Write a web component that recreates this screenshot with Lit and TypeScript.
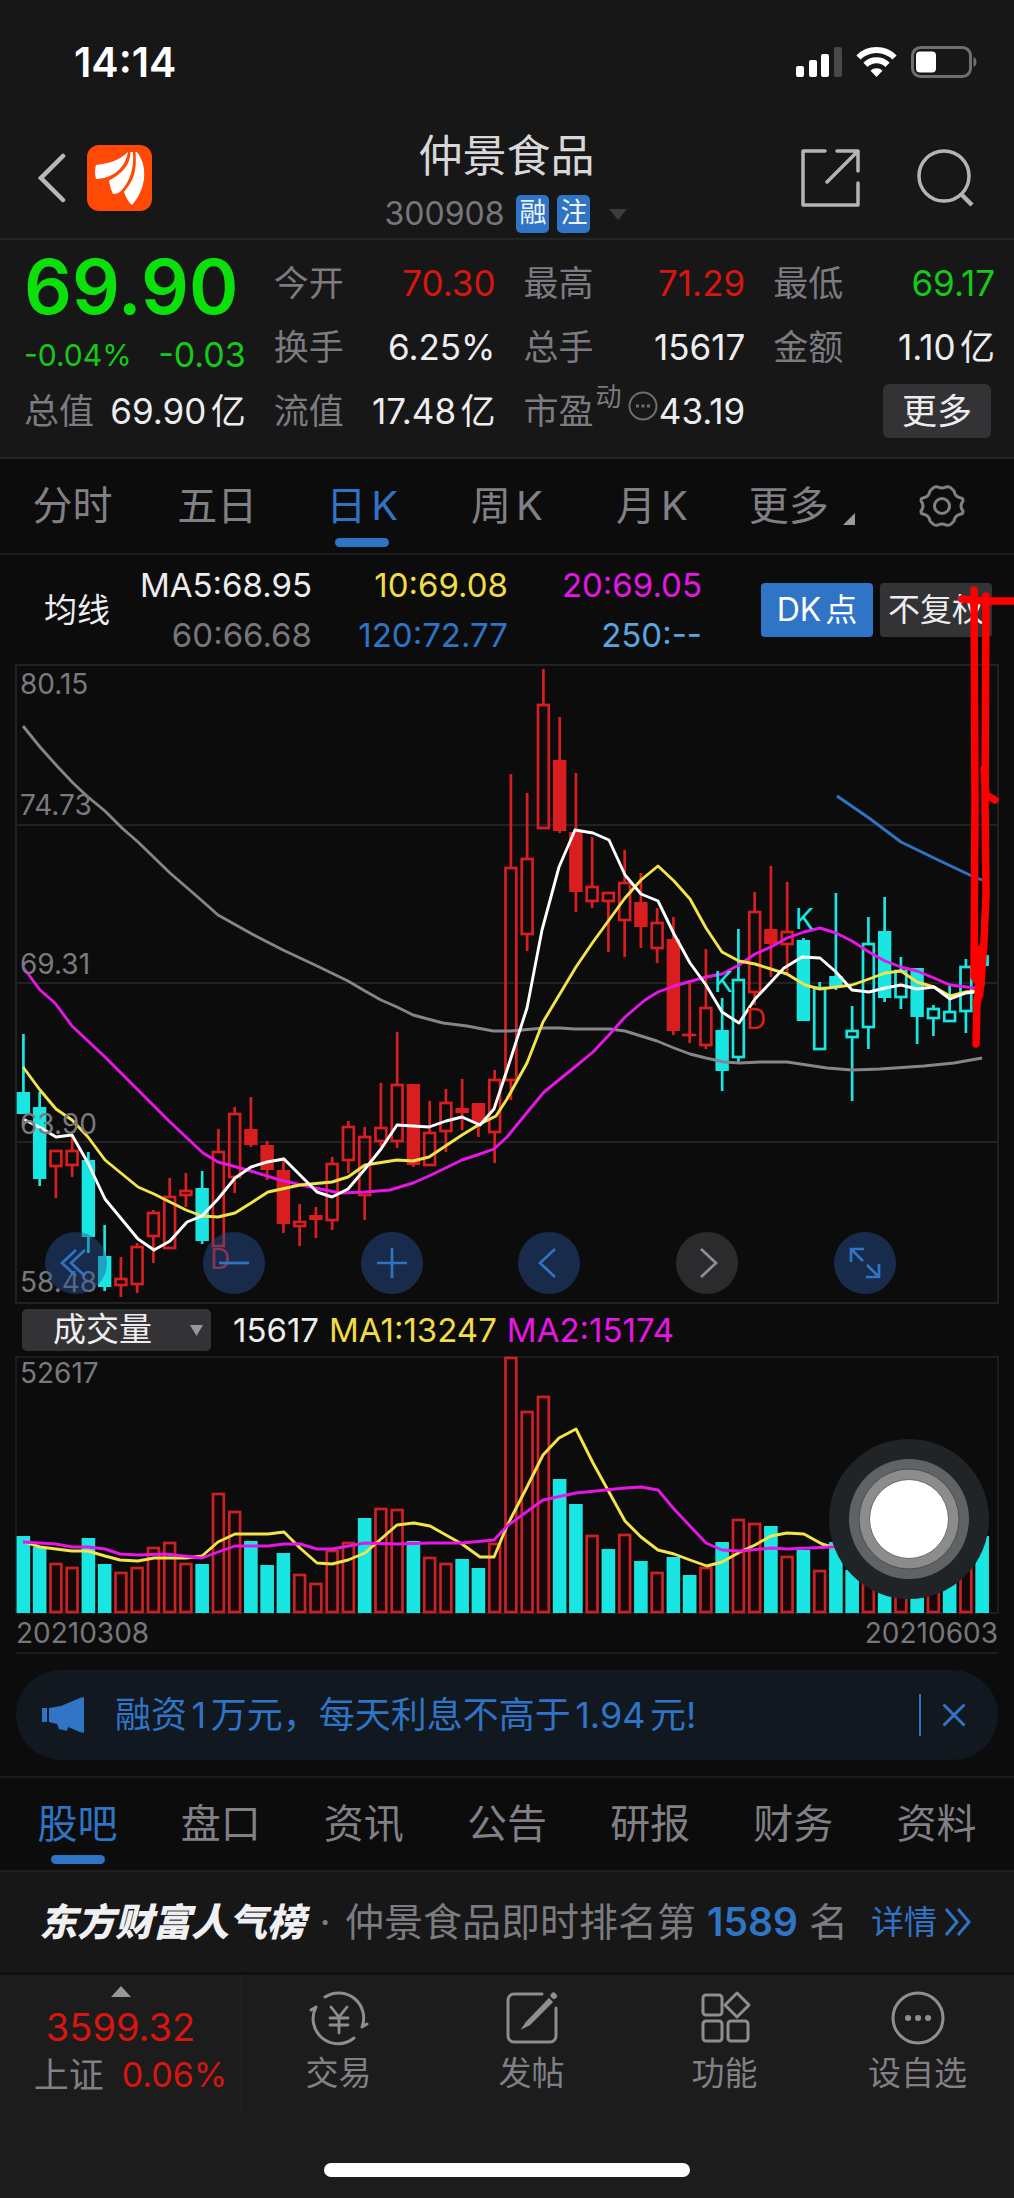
import { LitElement, html, svg, css, nothing } from "lit";
import { customElement, property, state } from "lit/decorators.js";
import { classMap } from "lit/directives/class-map.js";

const UP = "#d81e1e";
const DOWN = "#19e6e2";
const PITCH = 16.25;
const FIRST_X = 23.4;
const barX = (i: number) => FIRST_X + i * PITCH;

type Kind = "rh" | "rf" | "ch" | "cf";
/* [kind, high, body top, body bottom, low]; r/c = red/cyan, h/f = hollow/filled */
const CANDLES: [Kind, number, number, number, number][] = [
  ["cf", 1034, 1092, 1114, 1114], ["cf", 1092, 1107, 1179, 1186], ["rh", 1150, 1150, 1167, 1198],
  ["rh", 1136, 1150, 1166, 1177], ["cf", 1152, 1160, 1237, 1253], ["cf", 1225, 1256, 1287, 1291],
  ["rh", 1257, 1278, 1286, 1297], ["rh", 1243, 1246, 1285, 1293], ["rh", 1210, 1212, 1237, 1263],
  ["rh", 1178, 1196, 1249, 1249], ["rh", 1173, 1190, 1196, 1207], ["cf", 1171, 1188, 1241, 1244],
  ["rh", 1129, 1151, 1247, 1247], ["rh", 1107, 1113, 1178, 1193], ["rf", 1097, 1129, 1145, 1147],
  ["rf", 1141, 1145, 1170, 1180], ["rf", 1157, 1170, 1224, 1233], ["rh", 1204, 1221, 1227, 1246],
  ["rf", 1207, 1215, 1220, 1238], ["rh", 1157, 1163, 1221, 1230], ["rh", 1121, 1126, 1161, 1173],
  ["rh", 1127, 1136, 1196, 1220], ["rh", 1083, 1127, 1142, 1147], ["rh", 1032, 1084, 1142, 1148],
  ["rf", 1084, 1084, 1165, 1167], ["rh", 1101, 1132, 1166, 1166], ["rh", 1089, 1102, 1132, 1152],
  ["rf", 1079, 1108, 1113, 1130], ["rf", 1103, 1103, 1122, 1137], ["rh", 1070, 1079, 1133, 1163],
  ["rh", 774, 867, 1081, 1100], ["rh", 793, 858, 935, 951], ["rh", 669, 704, 829, 829],
  ["rf", 717, 760, 831, 833], ["rf", 773, 832, 892, 912], ["rh", 837, 886, 902, 908],
  ["rh", 892, 892, 902, 952], ["rh", 850, 882, 921, 957], ["rf", 873, 902, 927, 948],
  ["rh", 908, 922, 949, 963], ["rf", 917, 939, 1031, 1035], ["rf", 980, 1034, 1036, 1043],
  ["rh", 949, 1007, 1046, 1049], ["cf", 998, 1030, 1071, 1091], ["ch", 929, 979, 1058, 1062],
  ["rh", 892, 911, 993, 1005], ["rf", 866, 929, 944, 977], ["rh", 882, 931, 945, 973],
  ["cf", 938, 940, 1021, 1021], ["ch", 982, 987, 1050, 1050], ["cf", 893, 976, 987, 990],
  ["ch", 1006, 1030, 1038, 1101], ["ch", 917, 943, 1028, 1049], ["cf", 897, 931, 998, 1002],
  ["ch", 957, 970, 998, 1009], ["cf", 968, 968, 1017, 1044], ["ch", 1005, 1008, 1019, 1036],
  ["ch", 985, 1011, 1022, 1022], ["ch", 959, 966, 1012, 1033], ["cf", 955, 955, 966, 966],
];

const PRICE_LINES: [string, string][] = [
  ["#85858a", "23,726 40,747 57,766 73,783 88,797 105,811 122,828 138,842 170,873 200,899 218,915 252,934 283,950 315,965 348,981 365,991 381,1000 397,1007 413,1015 443,1023 467,1026 493,1031 511,1031 522,1030 544,1028 560,1028 575,1029 610,1029 625,1031 657,1041 674,1048 690,1054 706,1058 724,1062 740,1063 760,1062 787,1062 807,1065 827,1068 852,1070 880,1069 924,1066 954,1063 982,1058"],
  ["#2f74c5", "837,796 869,818 901,842 934,858 974,877 982,880"],
  ["#e616e6", "23,967 40,990 55,1003 72,1026 105,1057 138,1090 170,1122 203,1153 218,1162 251,1171 280,1180 310,1187 340,1193 365,1192 390,1190 413,1183 429,1176 462,1160 480,1154 494,1149 507,1137 525,1115 544,1092 576,1066 593,1052 609,1035 625,1017 645,1000 658,992 674,986 706,977 722,974 739,965 755,954 771,947 787,938 804,932 820,928 836,933 852,941 869,952 885,961 901,967 917,971 934,978 950,985 975,988"],
  ["#f4e44c", "23,1067 40,1090 56,1109 72,1120 88,1137 105,1160 138,1187 154,1194 186,1210 202,1216 218,1217 235,1213 251,1203 268,1192 300,1185 332,1182 348,1177 365,1165 397,1160 413,1161 429,1157 462,1135 480,1124 496,1116 507,1099 527,1063 543,1022 576,967 593,942 609,920 625,898 641,880 658,866 674,881 690,899 706,928 722,952 739,961 755,964 787,974 805,985 820,989 836,987 852,985 869,979 885,973 901,971 917,982 934,987 950,996 966,992 975,991"],
  ["#ffffff", "23,1119 41,1128 56,1137 72,1135 88,1163 105,1199 138,1239 154,1250 170,1241 187,1222 202,1216 218,1199 235,1178 251,1167 267,1162 284,1159 300,1175 317,1192 332,1197 348,1189 365,1169 381,1149 397,1125 429,1127 446,1121 462,1117 480,1125 494,1109 507,1070 527,1008 542,930 559,867 575,830 593,833 609,840 625,875 641,894 658,901 674,934 690,963 706,985 722,1012 739,1023 755,999 784,968 802,957 820,958 836,972 852,990 869,992 885,988 901,985 917,989 934,987 950,999 966,993 975,992"],
];

const VOLUMES =
  "c1536 c1547 r1563 r1567 c1538 c1564 r1572 r1567 r1547 r1542 r1563 c1564 r1493 r1511 c1541 c1565 c1553 r1574 r1583 r1550 r1542 c1518 r1508 r1509 c1541 r1557 r1563 c1559 c1568 r1543 r1357 r1411 r1396 c1479 c1504 r1535 c1549 r1534 c1561 r1572 c1557 c1575 r1567 c1542 r1519 r1523 c1526 r1556 c1550 r1570 c1542 c1570 r1575 c1560 r1570 c1565 r1568 c1562 r1565 c1536".split(" ");

const VOLUME_LINES: [string, string][] = [
  ["#f4e44c", "25,1542 40,1547 56,1549 72,1551 88,1551 105,1556 120,1560 138,1561 154,1558 186,1558 202,1556 218,1542 235,1534 268,1534 284,1532 300,1548 317,1563 332,1564 348,1560 365,1553 397,1525 414,1523 430,1526 462,1544 480,1557 494,1557 507,1526 527,1487 543,1455 559,1438 576,1429 593,1463 609,1492 625,1521 641,1537 658,1550 674,1554 690,1560 707,1566 722,1562 740,1552 755,1545 771,1536 787,1533 804,1534 822,1544 832,1547 870,1550"],
  ["#e616e6", "23,1542 56,1544 72,1547 88,1547 105,1549 120,1554 138,1555 165,1554 202,1558 218,1552 235,1546 268,1546 284,1544 300,1544 317,1549 332,1549 365,1543 397,1544 430,1543 462,1543 494,1540 507,1526 543,1500 576,1493 625,1488 641,1487 658,1490 674,1509 706,1543 722,1550 740,1551 771,1548 787,1549 832,1547 870,1547"],
];

const base = css`
  :host {
    display: block;
    font-family: Inter, "Noto Sans CJK SC", sans-serif;
    text-autospace: normal;
  }
  * { box-sizing: border-box; }
  button {
    font: inherit;
    color: inherit;
    background: none;
    border: 0;
    padding: 0;
    margin: 0;
    text-autospace: inherit;
  }
  svg { display: block; }
  .green { color: #17c917; }
  .red { color: #d9150f; }
`;

@customElement("status-bar")
class StatusBar extends LitElement {
  static styles = [base, css`
    .bar {
      height: 124px;
      padding: 0 36px 0 74px;
      display: flex;
      align-items: center;
      justify-content: space-between;
      color: #fff;
    }
    .time { font-size: 41px; font-weight: 600; line-height: 48px; }
    .signals { display: flex; gap: 14px; align-items: center; }
  `];
  render() {
    return html`<div class="bar">
      <span class="time">14:14</span>
      <div class="signals">
        <svg width="46" height="32" viewBox="0 0 46 32" fill="#fff" aria-hidden="true">
          <rect x="0" y="20" width="8" height="11" rx="2" />
          <rect x="13" y="14" width="8" height="17" rx="2" />
          <rect x="25" y="8" width="8" height="23" rx="2" />
          <rect x="38" y="1" width="8" height="30" rx="2" fill="#48484a" />
        </svg>
        <svg width="41" height="32" viewBox="0 0 41 32" fill="none" stroke="#fff" stroke-width="6" aria-hidden="true">
          <path d="M2.5 11.5a25.5 25.5 0 0 1 36 0" />
          <path d="M9.5 18.8a15.6 15.6 0 0 1 22 0" />
          <path d="M20.5 31l-6-6.2a8.5 8.5 0 0 1 12 0z" fill="#fff" stroke="none" />
        </svg>
        <svg width="67" height="32" viewBox="0 0 67 32" aria-hidden="true">
          <rect x="1.500" y="1.500" width="58" height="29" rx="8" fill="none" stroke="#6f6f71" stroke-width="3" />
          <rect x="5" y="5.500" width="20" height="21" rx="4" fill="#fff" />
          <path d="M62.500 11c4 1.500 4 8.500 0 10z" fill="#6f6f71" />
        </svg>
      </div>
    </div>`;
  }
}

@customElement("stock-header")
class StockHeader extends LitElement {
  static styles = [base, css`
    .head {
      height: 116px;
      padding: 0 39px 0 38px;
      display: grid;
      grid-template-columns: 1fr auto 1fr;
      align-items: center;
      border-bottom: 2px solid #242426;
    }
    .left { display: flex; align-items: center; gap: 20px; padding-bottom: 6px; }
    .right { display: flex; align-items: center; justify-content: flex-end; gap: 56px; padding-bottom: 6px; }
    .mid { display: flex; flex-direction: column; align-items: center; gap: 6px; }
    h1 { margin: 0; font-size: 44px; line-height: 60px; font-weight: 400; color: #d8d8da; }
    .sub { display: flex; align-items: center; color: #77777b; font-size: 32px; line-height: 44px; }
    .tag {
      margin-left: 8px;
      width: 33px;
      height: 38px;
      border-radius: 5px;
      background: #2f74c5;
      color: #f0f4fa;
      font-size: 27px;
      line-height: 36px;
      text-align: center;
    }
    .code { margin-right: 4px; }
    .caret { margin-left: 18px; }
  `];
  render() {
    return html`<header class="head">
      <div class="left">
        <button aria-label="返回">
          <svg width="29" height="50" viewBox="0 0 29 50" fill="none" stroke="#b8b8ba" stroke-width="4.500" stroke-linecap="round">
            <path d="M25 3L3 25l22 22" />
          </svg>
        </button>
        <svg width="65" height="66" viewBox="0 0 65 66" aria-hidden="true">
          <rect width="65" height="66" rx="12" fill="#ff4a05" />
          <g fill="#fff">
            <path d="M41 7C32 16 22 18 9 20Q7 26 9 34C28 33 38 22 41 7Z" />
            <path d="M43.500 7C43 20 36 28 22 35.500Q23 43 26 49Q30 49 33 47C44 36 47 22 46 7Z" />
            <path d="M48.500 7C50 26 47 35 37 47Q40 56 45 60C57 47 63 24 50 7Z" />
          </g>
        </svg>
      </div>
      <div class="mid">
        <h1>仲景食品</h1>
        <div class="sub">
          <span class="code">300908</span>
          <span class="tag">融</span><span class="tag">注</span>
          <svg class="caret" width="20" height="11" viewBox="0 0 20 11" aria-hidden="true"><path d="M1 0h18L10 11z" fill="#3c3c3e" /></svg>
        </div>
      </div>
      <div class="right">
        <button aria-label="分享">
          <svg width="60" height="58" viewBox="0 0 60 58" fill="none" stroke="#b4b4b6" stroke-width="3.500" stroke-linejoin="round" stroke-linecap="round">
            <path d="M24 2H2v54h55V34M36 2h21v20M57 2L26 33" />
          </svg>
        </button>
        <button aria-label="搜索">
          <svg width="58" height="58" viewBox="0 0 58 58" fill="none" stroke="#b4b4b6" stroke-width="3.500">
            <circle cx="27" cy="27" r="25" /><path d="M44 45l11 11" stroke-width="4.500" />
          </svg>
        </button>
      </div>
    </header>`;
  }
}

@customElement("quote-panel")
class QuotePanel extends LitElement {
  static styles = [base, css`
    .grid {
      padding: 11px 19px 14px 24px;
      display: grid;
      grid-template-columns: repeat(4, minmax(0, 1fr));
      grid-auto-rows: 64px;
      column-gap: 28px;
      align-items: center;
      border-bottom: 2px solid #242426;
      font-size: 35px;
      line-height: 48px;
      color: #ededef;
      white-space: nowrap;
    }
    .cell { display: flex; justify-content: space-between; align-items: center; }
    .label { color: #7b7b80; }
    .price { color: #0be00b; font-size: 75px; font-weight: 600; line-height: 64px; padding-top: 8px; }
    .change { padding-top: 16px; font-size: 34px; }
    .pct { font-size: 30px; }
    .pe { display: flex; align-items: center; }
    sup { font-size: 26px; line-height: 26px; margin: 0 6px 28px 2px; vertical-align: baseline; color: #7b7b80; }
    .info { margin-bottom: 10px; }
    .more {
      justify-self: end;
      margin-right: 4px;
      width: 108px;
      height: 54px;
      border-radius: 6px;
      background: #333335;
      line-height: 50px;
    }
  `];
  private cell(label: string, value: string, tone = "") {
    return html`<div class="cell"><span class="label">${label}</span><span class=${tone}>${value}</span></div>`;
  }
  render() {
    return html`<section class="grid">
      <div class="price">69.90</div>
      ${this.cell("今开", "70.30", "red")}
      ${this.cell("最高", "71.29", "red")}
      ${this.cell("最低", "69.17", "green")}
      <div class="cell change green"><span class="pct">-0.04%</span><span>-0.03</span></div>
      ${this.cell("换手", "6.25%")}
      ${this.cell("总手", "15617")}
      ${this.cell("金额", "1.10亿")}
      ${this.cell("总值", "69.90亿")}
      ${this.cell("流值", "17.48亿")}
      <div class="cell">
        <span class="pe"><span class="label">市盈</span><sup>动</sup>
          <svg class="info" width="30" height="30" viewBox="0 0 30 30" fill="none" stroke="#6e6e72" stroke-width="2" aria-hidden="true">
            <circle cx="15" cy="15" r="13.500" />
            <path d="M8 15h3M13.500 15h3M19 15h3" stroke-width="3" />
          </svg>
        </span>
        <span>43.19</span>
      </div>
      <button class="more">更多</button>
    </section>`;
  }
}

@customElement("tab-strip")
class TabStrip extends LitElement {
  static styles = [base, css`
    .tabs {
      display: grid;
      grid-template-columns: repeat(7, minmax(0, 1fr));
      height: 96px;
      font-size: 40px;
      line-height: 56px;
      color: #808085;
      background: #0c0c0d;
    }
    .period { border-bottom: 2px solid #1d1d1f; }
    .section { padding: 0 6px; height: 92px; }
    .tab {
      position: relative;
      display: flex;
      align-items: center;
      justify-content: center;
      white-space: nowrap;
    }
    .on { color: #2f74c5; }
    .on::after {
      content: "";
      position: absolute;
      left: 50%;
      bottom: 6px;
      width: 54px;
      margin-left: -27px;
      height: 9px;
      border-radius: 5px;
      background: #2f74c5;
    }
    .tab.wide { padding-left: 10px; }
    .corner { margin: 26px 0 0 14px; }
  `];
  @property({ type: Array }) items: string[] = [];
  @property() kind: "period" | "section" = "period";
  @state() private active = -1;
  @property({ type: Number }) start = 0;
  render() {
    const current = this.active < 0 ? this.start : this.active;
    return html`<nav class=${"tabs " + this.kind}>
      ${this.items.map((t, i) => html`<button
        class=${classMap({ tab: true, on: i === current, wide: t === "更多" })}
        @click=${() => (this.active = i)}
      >${t}${t === "更多"
        ? html`<svg class="corner" width="12" height="12" viewBox="0 0 12 12" aria-hidden="true"><path d="M12 0v12H0z" fill="#9a9a9e" /></svg>`
        : nothing}</button>`)}
      ${this.kind === "period"
        ? html`<button class="tab" aria-label="设置">
            <svg width="46" height="44" viewBox="0 0 46 44" fill="none" stroke="#808085" stroke-width="3" stroke-linejoin="round">
              <path d="M14 4q2-2 5-1q4 2 8 0q3-1 5 1l3 3q1 6 7 7q2 0 2 3q-4 5 0 10q0 3-2 3q-6 1-7 7l-3 3q-2 2-5 1q-4-2-8 0q-3 1-5-1l-3-3q-1-6-7-7q-2 0-2-3q4-5 0-10q0-3 2-3q6-1 7-7z" />
              <circle cx="23" cy="22" r="7.500" />
            </svg>
          </button>`
        : nothing}
    </nav>`;
  }
}

@customElement("price-chart")
class PriceChart extends LitElement {
  static styles = [base, css`
    .panel { position: relative; background: #0c0c0d; }
    .legend {
      height: 109px;
      padding: 0 22px 0 44px;
      display: flex;
      align-items: center;
      font-size: 33px;
      line-height: 50px;
      color: #ededef;
      white-space: nowrap;
    }
    .values {
      flex: 1;
      display: grid;
      grid-template-columns: 202px 196px 194px;
      text-align: right;
    }
    .g { color: #77777b; }
    .b { color: #2f74c5; }
    .y { color: #f0dc46; }
    .m { color: #e616e6; }
    .l { color: #58a6e0; }
    .chip {
      width: 112px;
      height: 54px;
      margin-left: 7px;
      border-radius: 4px;
      background: #333335;
      font-size: 32px;
      line-height: 50px;
    }
    .chip.blue { background: #2f74c5; color: #fff; }
    .plot, .marks { width: 100%; height: auto; }
    .plot text { font-size: 28px; font-family: Inter, sans-serif; }
    .tools {
      position: absolute;
      left: 45px;
      right: 118px;
      bottom: 10px;
      display: flex;
      justify-content: space-between;
    }
    .tool {
      width: 62px;
      height: 62px;
      border-radius: 50%;
      display: grid;
      place-items: center;
      background: rgba(39, 83, 149, 0.45);
      color: #2f74c5;
    }
    .tool.off { background: #2b2b2d; color: #8e8e92; }
    .marks { position: absolute; left: 0; top: 0; pointer-events: none; }
  `];
  private candle([kind, high, top, bottom, low]: (typeof CANDLES)[number], i: number) {
    const x = barX(i);
    const color = kind[0] === "r" ? UP : DOWN;
    const filled = kind[1] === "f";
    return svg`<g stroke=${color} stroke-width="2.700">
      <path d="M${x} ${high}V${top}M${x} ${bottom}V${low}" />
      ${filled
        ? svg`<rect x=${x - 6.7} y=${top} width="13.400" height=${bottom - top} fill=${color} stroke="none" />`
        : svg`<rect x=${x - 5.4} y=${top + 1} width="10.800" height=${Math.max(bottom - top - 2, 2)} fill="none" />`}
    </g>`;
  }
  private tool(label: string, d: string, off = false) {
    return html`<button class=${classMap({ tool: true, off })} aria-label=${label}>
      <svg width="40" height="40" viewBox="0 0 40 40" fill="none" stroke="currentColor" stroke-width="2.700"><path d=${d} /></svg>
    </button>`;
  }
  render() {
    return html`<section class="panel">
      <div class="legend">
        <span>均线</span>
        <div class="values">
          <span>MA5:68.95</span><span class="y">10:69.08</span><span class="m">20:69.05</span>
          <span class="g">60:66.68</span><span class="b">120:72.77</span><span class="l">250:--</span>
        </div>
        <button class="chip blue">DK点</button>
        <button class="chip">不复权</button>
      </div>
      <svg class="plot" viewBox="0 664 1014 640" role="img" aria-label="日K">
        <g fill="none" stroke="#222224" stroke-width="2">
          <rect x="16" y="665" width="982" height="638" />
          <path d="M16 825H998M16 983H998M16 1142H998" />
        </g>
        ${CANDLES.map((c, i) => this.candle(c, i))}
        <path d="M682 1035h13" stroke=${UP} stroke-width="2.700" />
        <g fill="none" stroke-width="2.900" stroke-linejoin="round">
          ${PRICE_LINES.map(([c, p]) => svg`<polyline points=${p} stroke=${c} />`)}
        </g>
        <g fill="#7a7a7e">
          <text x="20" y="694">80.15</text>
          <text x="20" y="815">74.73</text>
          <text x="20" y="974">69.31</text>
          <text x="20" y="1134">63.90</text>
          <text x="20" y="1292">58.48</text>
        </g>
        <text x="714" y="992" fill=${DOWN}>K</text>
        <text x="795" y="929" fill=${DOWN}>K</text>
        <text x="746" y="1029" fill=${UP}>D</text>
        <text x="210" y="1269" fill=${UP}>D</text>
      </svg>
      <div class="tools">
        ${this.tool("最左", "M20 7L6 20l14 13M29 7L15 20l14 13")}
        ${this.tool("缩小", "M5 20h30")}
        ${this.tool("放大", "M5 20h30M20 5v30")}
        ${this.tool("左移", "M26 6L11 20l15 14")}
        ${this.tool("右移", "M14 6l15 14L14 34", true)}
        ${this.tool("全屏", "M6 19V6h13M6 6l12 12M34 21v13H21M34 34L22 22")}
      </div>
      <svg class="marks" viewBox="0 555 1014 500" fill="none" stroke="#ff0000" stroke-width="7.500" stroke-linecap="round" stroke-linejoin="round" aria-hidden="true">
        <path d="M962 599L984 601H1020" />
        <path d="M974 590L975 800L974 977L981 984L977 1004L976 1044" />
        <path d="M986 596L985 800L986 895L984 940L981 984L976 1003" />
        <path d="M979 950V995" stroke-width="9" />
        <path d="M984 769L986 795L995 800" />
      </svg>
    </section>`;
  }
}

@customElement("volume-chart")
class VolumeChart extends LitElement {
  static styles = [base, css`
    .panel { background: #0c0c0d; padding-bottom: 16px; }
    .head {
      height: 52px;
      padding: 0 22px;
      display: flex;
      align-items: center;
      gap: 10px;
      font-size: 33px;
      line-height: 44px;
      color: #ededef;
      white-space: nowrap;
    }
    .pick { position: relative; margin-right: 12px; }
    select {
      appearance: none;
      display: block;
      width: 189px;
      height: 42px;
      padding: 0 0 2px 31px;
      border: 0;
      border-radius: 5px;
      background: #333335;
      color: #ededef;
      font-family: inherit;
      font-size: 33px;
      line-height: 40px;
    }
    .caret { position: absolute; right: 8px; top: 16px; pointer-events: none; }
    .y { color: #f0dc46; }
    .m { color: #e616e6; }
    .body { position: relative; }
    .plot { width: 100%; height: auto; }
    .plot text { font-size: 28px; font-family: Inter, sans-serif; }
    .dates {
      margin: 0 16px;
      height: 40px;
      display: flex;
      justify-content: space-between;
      font-size: 28px;
      line-height: 38px;
      color: #77777b;
      border-bottom: 2px solid #1d1d1f;
    }
    .assist { position: absolute; right: 25px; top: 83px; }
  `];
  render() {
    return html`<section class="panel">
      <div class="head">
        <div class="pick">
          <select aria-label="指标"><option>成交量</option></select>
          <svg class="caret" width="13" height="11" viewBox="0 0 13 11" aria-hidden="true"><path d="M0 0h13L6.500 11z" fill="#98989c" /></svg>
        </div>
        <span>15617</span><span class="y">MA1:13247</span><span class="m">MA2:15174</span>
      </div>
      <div class="body">
        <svg class="plot" viewBox="0 1356 1014 258" role="img" aria-label="成交量">
          <rect x="16" y="1357" width="982" height="256" fill="none" stroke="#1d1d1f" stroke-width="2" />
          ${VOLUMES.map((v, i) => {
            const y = Number(v.slice(1));
            return v[0] === "c"
              ? svg`<rect x=${barX(i) - 6.8} y=${y} width="13.600" height=${1613 - y} fill=${DOWN} />`
              : svg`<rect x=${barX(i) - 5.4} y=${y + 1} width="10.800" height=${1611 - y} fill="#14080a" stroke="#c92222" stroke-width="2.700" />`;
          })}
          <g fill="none" stroke-width="2.900" stroke-linejoin="round">
            ${VOLUME_LINES.map(([c, p]) => svg`<polyline points=${p} stroke=${c} />`)}
          </g>
          <text x="20" y="1383" fill="#7a7a7e">52617</text>
        </svg>
        <svg class="assist" width="160" height="160" viewBox="0 0 160 160" aria-hidden="true">
          <circle cx="80" cy="80" r="80" fill="#212426" />
          <circle cx="80" cy="80" r="60" fill="#616264" />
          <circle cx="80" cy="80" r="50" fill="#8b8c8d" stroke="#4a4b4d" stroke-width="1" />
          <circle cx="80" cy="80" r="39.500" fill="#fff" stroke="#6a6a6a" stroke-width="1" />
        </svg>
      </div>
      <div class="dates"><span>20210308</span><span>20210603</span></div>
    </section>`;
  }
}

@customElement("notice-bar")
class NoticeBar extends LitElement {
  static styles = [base, css`
    .wrap { background: #0c0c0d; padding: 0 16px 16px; border-bottom: 2px solid #1d1d1f; }
    .bar {
      height: 90px;
      border-radius: 45px;
      background: #111820;
      color: #2f74c5;
      display: flex;
      align-items: center;
      padding: 0 32px 0 26px;
      font-size: 36px;
      line-height: 52px;
    }
    .text { flex: 1; margin-left: 30px; color: inherit; text-decoration: none; white-space: nowrap; }
    .close { border-left: 2px solid #2f74c5; padding: 9px 0 9px 21px; }
  `];
  @state() private open = true;
  render() {
    return html`<div class="wrap">${this.open
      ? html`<div class="bar">
          <svg width="43" height="36" viewBox="0 0 43 36" fill="#2f74c5" aria-hidden="true">
            <path d="M0 11h5v14H0zM7 11l12-2L38 1l4-1v36l-4-1l-12-5-1 4-8-2-2-5-8-2z" />
          </svg>
          <a class="text" href="#margin">融资1万元，每天利息不高于1.94元!</a>
          <button class="close" aria-label="关闭" @click=${() => (this.open = false)}>
            <svg width="24" height="24" viewBox="0 0 24 24" fill="none" stroke="#2f74c5" stroke-width="3"><path d="M1.500 1.500l21 21M22.500 1.500l-21 21" /></svg>
          </button>
        </div>`
      : nothing}</div>`;
  }
}

@customElement("rank-bar")
class RankBar extends LitElement {
  static styles = [base, css`
    .row {
      height: 102px;
      padding: 0 42px 0 39px;
      display: flex;
      align-items: center;
      border-top: 2px solid #1f1f21;
      background: #171718;
      font-size: 39px;
      line-height: 56px;
      color: #7b7b80;
      white-space: nowrap;
    }
    .brand { font-style: italic; font-weight: 900; font-size: 38px; color: #f0f0f2; }
    .dot { width: 40px; text-align: center; }
    .num { color: #2f74c5; font-weight: 600; }
    .more { margin-left: auto; display: flex; align-items: center; gap: 8px; font-size: 33px; color: #2f74c5; text-decoration: none; }
  `];
  render() {
    return html`<div class="row">
      <span class="brand">东方财富人气榜</span>
      <span class="dot">·</span>
      <span>仲景食品即时排名第 <span class="num">1589</span> 名</span>
      <a class="more" href="#rank">详情
        <svg width="27" height="30" viewBox="0 0 27 30" fill="none" stroke="#2f74c5" stroke-width="3"><path d="M1 2l11 13L1 28M13 2l11 13-11 13" /></svg>
      </a>
    </div>`;
  }
}

@customElement("bottom-bar")
class BottomBar extends LitElement {
  static styles = [base, css`
    .bar {
      border-top: 3px solid #0e0e0f;
      background: #1c1c1d;
      display: grid;
      grid-template-columns: 242px repeat(4, minmax(0, 1fr));
      height: 138px;
      box-sizing: content-box;
      color: #808085;
    }
    .index {
      border-right: 1px solid #262628;
      display: flex;
      flex-direction: column;
      align-items: center;
      padding-top: 11px;
      white-space: nowrap;
    }
    .value { font-size: 38px; line-height: 60px; }
    .line { display: flex; gap: 18px; align-items: center; font-size: 35px; line-height: 36px; padding-left: 20px; }
    .pct { font-size: 34px; }
    .item {
      display: flex;
      flex-direction: column;
      align-items: center;
      padding-top: 15px;
      gap: 3px;
      font-size: 33px;
      line-height: 48px;
    }
    .home { background: #1c1c1d; padding: 50px 0 21px; }
    .pill { width: 36%; height: 14px; border-radius: 7px; margin: 0 auto; background: #fff; }
  `];
  private item(label: string, art: unknown) {
    return html`<button class="item">
      <svg width="60" height="56" viewBox="0 0 60 56" fill="none" stroke="#8e8e92" stroke-width="3" stroke-linecap="round" aria-hidden="true">${art}</svg>
      ${label}
    </button>`;
  }
  render() {
    return html`<footer>
      <div class="bar">
        <button class="index">
          <svg width="20" height="11" viewBox="0 0 20 11" aria-hidden="true"><path d="M10 0l10 11H0z" fill="#98989c" /></svg>
          <span class="value red">3599.32</span>
          <span class="line">上证 <span class="pct red">0.06%</span></span>
        </button>
        ${this.item("交易", svg`
          <path d="M16 7A25 25 0 0 1 53 37M45 48A25 25 0 0 1 7 17M7 17l-5 3M53 37l5-3" />
          <path d="M22 17l8 10 8-10M30 27v16M21 28h18M21 35h18" stroke-width="2.800" />`)}
        ${this.item("发帖", svg`
          <path d="M40 4H12a6 6 0 0 0-6 6v36a6 6 0 0 0 6 6h36a6 6 0 0 0 6-6V18" />
          <path d="M47 10L25 33l-2 3 4-2L49 12z" fill="#8e8e92" /><path d="M51.500 5.500l.5.5" stroke-width="6" />`)}
        ${this.item("功能", svg`
          <rect x="8" y="5" width="19" height="20" rx="3" /><path d="M42 3l12 12-12 12-12-12z" stroke-linejoin="round" />
          <rect x="8" y="31" width="19" height="20" rx="3" /><rect x="33" y="31" width="20" height="20" rx="3" />`)}
        ${this.item("设自选", svg`
          <circle cx="30" cy="28" r="25" /><path d="M20 28h.1M30 28h.1M40 28h.1" stroke-width="6" />`)}
      </div>
      <div class="home"><div class="pill"></div></div>
    </footer>`;
  }
}

@customElement("app-root")
class AppRoot extends LitElement {
  static styles = css`
    :host { display: block; background: #171718; }
  `;
  private periods = ["分时", "五日", "日K", "周K", "月K", "更多"];
  private sections = ["股吧", "盘口", "资讯", "公告", "研报", "财务", "资料"];
  render() {
    return html`
      <status-bar></status-bar>
      <stock-header></stock-header>
      <quote-panel></quote-panel>
      <tab-strip kind="period" start="2" .items=${this.periods}></tab-strip>
      <price-chart></price-chart>
      <volume-chart></volume-chart>
      <notice-bar></notice-bar>
      <tab-strip kind="section" start="0" .items=${this.sections}></tab-strip>
      <rank-bar></rank-bar>
      <bottom-bar></bottom-bar>
    `;
  }
}
